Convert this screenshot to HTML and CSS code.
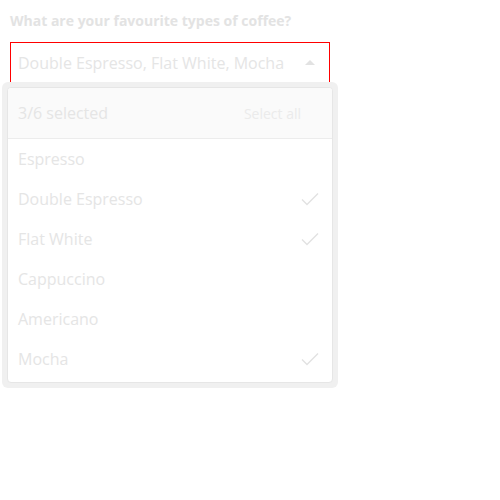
FILE: index.html
```html
<!DOCTYPE html>
<html>
<head>
<meta charset="utf-8">
<link rel="stylesheet" href="styles.css">
</head>
<body>
<div class="field">
  <div class="label">What are your favourite types of coffee?</div>
  <div class="picker">
    <div class="control">
      <span class="value">Double Espresso, Flat White, Mocha</span>
      <svg class="arrow" width="10" height="5" viewBox="0 0 10 5"><path d="M0 5 L5 0 L10 5 Z" fill="#e2e2e2"/></svg>
    </div>
    <div class="menu">
      <div class="panel">
        <div class="head">
          <span class="count">3/6 selected</span>
          <span class="all">Select all</span>
        </div>
        <div class="list">
          <div class="item"><span>Espresso</span></div>
          <div class="item"><span>Double Espresso</span><svg class="check" width="18" height="14" viewBox="0 0 18 14"><path d="M1 7.5 L6 12.5 L17 1.5" fill="none" stroke="#e2e2e2" stroke-width="1.4"/></svg></div>
          <div class="item"><span>Flat White</span><svg class="check" width="18" height="14" viewBox="0 0 18 14"><path d="M1 7.5 L6 12.5 L17 1.5" fill="none" stroke="#e2e2e2" stroke-width="1.4"/></svg></div>
          <div class="item"><span>Cappuccino</span></div>
          <div class="item"><span>Americano</span></div>
          <div class="item"><span>Mocha</span><svg class="check" width="18" height="14" viewBox="0 0 18 14"><path d="M1 7.5 L6 12.5 L17 1.5" fill="none" stroke="#e2e2e2" stroke-width="1.4"/></svg></div>
        </div>
      </div>
    </div>
  </div>
</div>
</body>
</html>
```
FILE: styles.css
```css
* { box-sizing: border-box; }
html { height: 100%; }
body {
  margin: 0;
  min-height: 500px;
  padding: 11px 10px;
  font-family: "Open Sans", "Noto Sans", sans-serif;
  background: #fff;
  color: #e5e5e5;
}
.label {
  font-size: 14px;
  font-weight: 700;
  line-height: 19px;
  color: #e3e3e3;
}
.picker {
  position: relative;
  width: 320px;
  margin-top: 12px;
}
.control {
  height: 40px;
  border: 1px solid #ff0000;
  border-bottom: 0;
  display: flex;
  align-items: center;
  justify-content: space-between;
  padding: 0 14px 0 7px;
}
.value {
  font-size: 16px;
  color: #e5e5e5;
}
.arrow { display: block; margin-top: -1px; }
.menu {
  position: absolute;
  top: 40px;
  left: -8px;
  width: 336px;
  padding: 5px;
  background: #f0f0f0;
  border-radius: 6px;
}
.panel {
  background: #fff;
  border: 1px solid #e6e6e6;
  border-radius: 4px;
  padding-bottom: 3px;
}
.head {
  height: 51px;
  background: #fafafa;
  border-bottom: 1px solid #ececec;
  border-radius: 3px 3px 0 0;
  display: flex;
  align-items: center;
  justify-content: space-between;
  padding: 0 31px 0 10px;
}
.count { font-size: 16px; color: #e5e5e5; }
.all { font-size: 14px; color: #ebebeb; }
.item {
  height: 40px;
  display: flex;
  align-items: center;
  justify-content: space-between;
  padding: 0 13px 0 10px;
  font-size: 16px;
  color: #e5e5e5;
}
.check { display: block; }
```
